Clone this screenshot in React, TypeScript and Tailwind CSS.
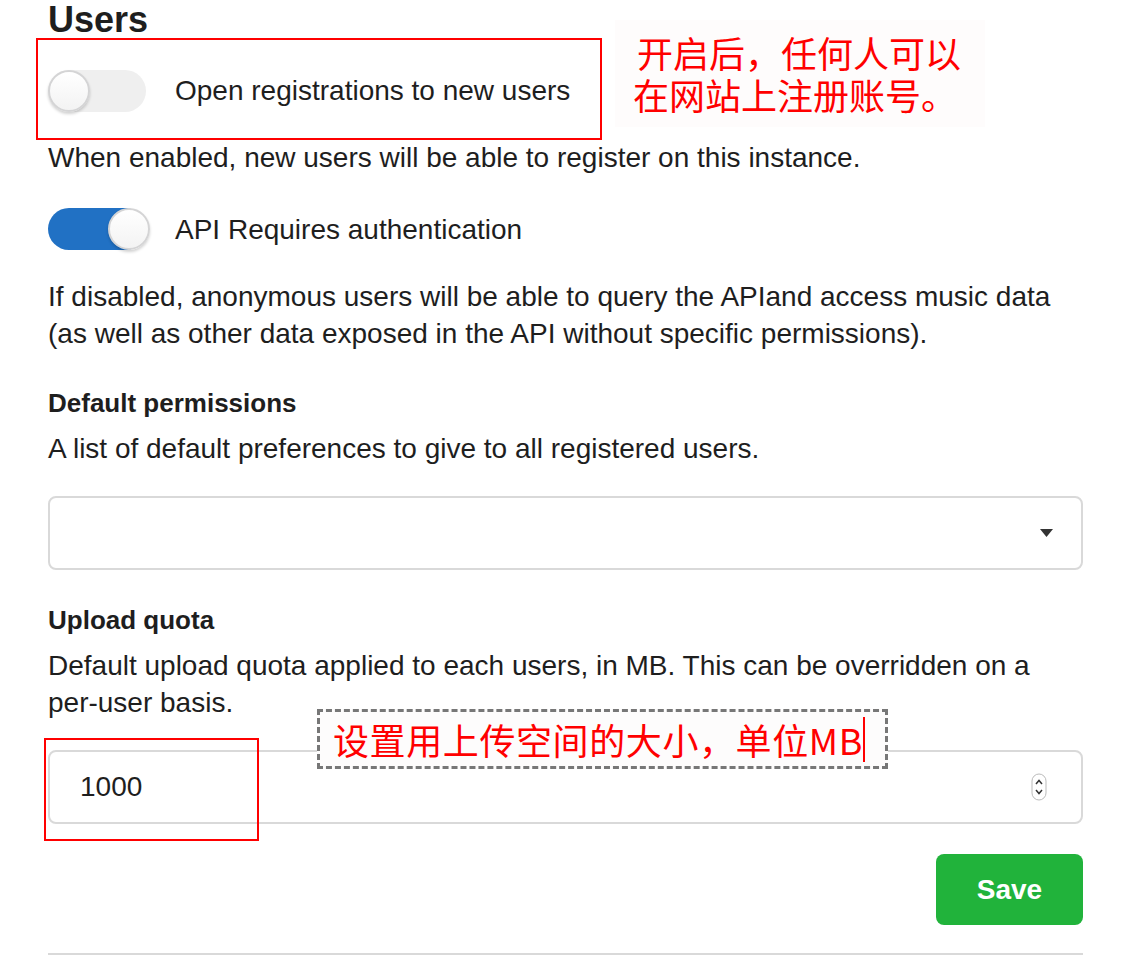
import React, { useState } from 'react';

const Toggle: React.FC<{ checked: boolean; onChange: () => void }> = ({ checked, onChange }) => (
    <button
        type="button"
        onClick={onChange}
        className="relative block h-[42px] w-[102px] shrink-0"
    >
        <span
            className={`absolute left-0 top-0 h-[42px] w-[98px] rounded-full ${checked ? 'bg-[#2171c4]' : 'bg-[#efefef]'}`}
        />
        <span
            className={`absolute top-0 h-[42px] w-[42px] rounded-full border-2 border-[#d4d4d5] bg-gradient-to-b from-white to-[#f3f3f3] shadow-[0_2px_3px_rgba(0,0,0,0.18)] ${checked ? 'left-[60px]' : 'left-0'}`}
        />
    </button>
);

const App: React.FC = () => {
    const [openRegistrations, setOpenRegistrations] = useState(false);
    const [apiAuth, setApiAuth] = useState(true);
    const [quota, setQuota] = useState('1000');

    return (
        <div className="relative min-h-[970px] w-[1144px] overflow-hidden bg-white font-['Liberation_Sans','Noto_Sans_CJK_SC',sans-serif] text-[28px] text-[#1e1e1e]">
            <div className="w-[1083px] pl-[48px]">
                <h2 className="mt-[2px] text-[36px] font-bold leading-[36px]">Users</h2>

                <div className="mt-[32px] flex h-[42px] items-center">
                    <div className="flex w-[127px] shrink-0 items-center">
                        <Toggle checked={openRegistrations} onChange={() => setOpenRegistrations(v => !v)} />
                    </div>
                    <span className="-mt-[1px] leading-[37px]">Open registrations to new users</span>
                </div>
                <p className="mt-[27px] leading-[37px]">When enabled, new users will be able to register on this instance.</p>

                <div className="mt-[32px] flex h-[42px] items-center">
                    <div className="flex w-[127px] shrink-0 items-center">
                        <Toggle checked={apiAuth} onChange={() => setApiAuth(v => !v)} />
                    </div>
                    <span className="leading-[37px]">API Requires authentication</span>
                </div>
                <p className="mt-[28px] leading-[37px]">
                    If disabled, anonymous users will be able to query the APIand access music data<br />
                    (as well as other data exposed in the API without specific permissions).
                </p>

                <h3 className="mt-[33px] text-[26px] font-bold leading-[37px]">Default permissions</h3>
                <p className="mt-[8px] leading-[37px]">A list of default preferences to give to all registered users.</p>
                <div className="mt-[29px] flex h-[74px] items-center justify-end rounded-[8px] border-2 border-[#d9d9d9] pr-[28px]">
                    <svg width="13" height="8" viewBox="0 0 13 8">
                        <path d="M0 0 L13 0 L6.5 8 Z" fill="#333" />
                    </svg>
                </div>

                <h3 className="mt-[32px] text-[26px] font-bold leading-[37px]">Upload quota</h3>
                <p className="mt-[8px] leading-[37px]">
                    Default upload quota applied to each users, in MB. This can be overridden on a<br />
                    per-user basis.
                </p>
                <div className="mt-[29px] flex h-[74px] items-center rounded-[8px] border-2 border-[#d9d9d9] pl-[30px] pr-[34px]">
                    <input
                        value={quota}
                        onChange={e => setQuota(e.target.value)}
                        className="flex-1 bg-transparent text-[28px] outline-none"
                    />
                    <svg width="16" height="28" viewBox="0 0 16 28">
                        <rect x="1" y="1" width="14" height="26" rx="7" fill="white" stroke="#bbb" strokeWidth="1" />
                        <path d="M5 11 L8 7.5 L11 11" fill="none" stroke="#333" strokeWidth="1.5" />
                        <path d="M5 17 L8 20.5 L11 17" fill="none" stroke="#333" strokeWidth="1.5" />
                    </svg>
                </div>

                <div className="mt-[30px] flex justify-end">
                    <button className="h-[71px] w-[147px] rounded-[8px] bg-[#21b33b] pt-[1px] text-[28px] font-bold text-white">Save</button>
                </div>
                <div className="mt-[28px] h-[2px] bg-[#d9d9d9]" />
            </div>

            {/* annotations */}
            <div className="absolute left-[36px] top-[38px] h-[102px] w-[566px] border-2 border-[#ff0000]" />
            <div className="absolute left-[615px] top-[20px] h-[107px] w-[370px] bg-[#fefcfc] pl-[22px] pt-[11px] font-['Noto_Sans_CJK_SC',sans-serif] text-[36px] leading-[42px] text-[#ff0000]">
                <div>开启后，任何人可以</div>
                <div className="-ml-[4px]">在网站上注册账号。</div>
            </div>

            <div className="absolute left-[44px] top-[738px] h-[103px] w-[215px] border-2 border-[#ff0000]" />
            <div className="absolute left-[317px] top-[709px] flex h-[60px] w-[571px] items-center border-[3px] border-dashed border-[#777] bg-[#fdfcfc] pl-[13px] font-['Noto_Sans_CJK_SC',sans-serif] text-[36px] leading-[42px] tracking-[0.6px] text-[#ff0000]">
                <span>设置用上传空间的大小，单位MB</span>
                <span className="h-[45px] w-[2px] bg-[#ff0000]" />
            </div>
        </div>
    );
};

export default App;
